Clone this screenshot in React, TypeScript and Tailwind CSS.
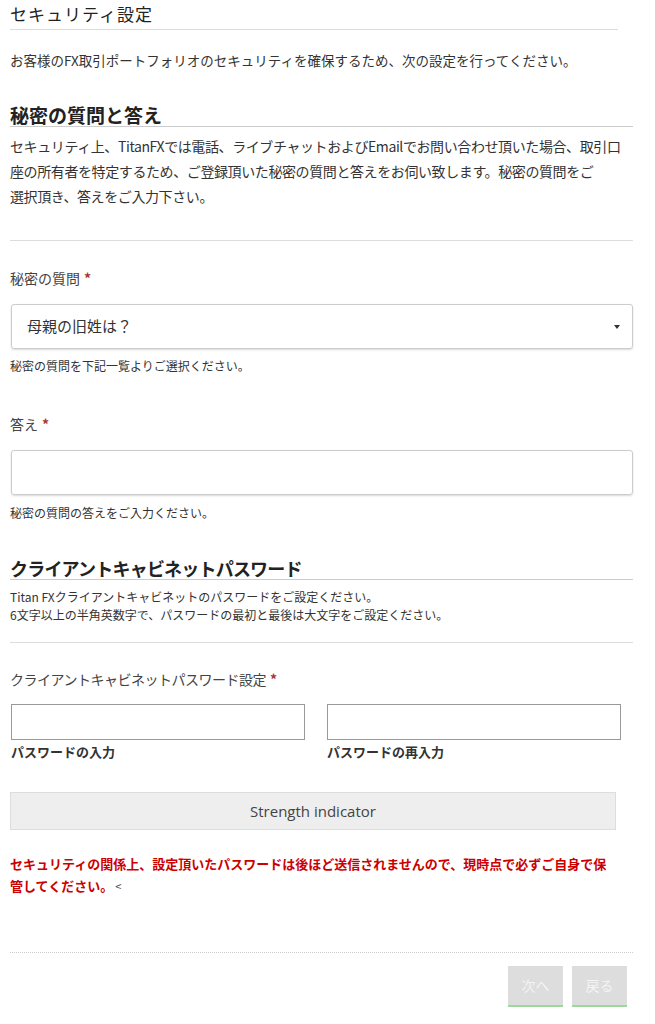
import React from "react";

const jp = { fontFamily: '"Noto Sans CJK JP", "Noto Sans", sans-serif' };

function Req() {
  return <span className="text-[#a33] ml-1 font-bold">*</span>;
}

export default function App() {
  return (
    <div className="w-[655px] min-h-[1024px] bg-white text-[#333]" style={jp}>
      <div className="pl-[10px] pr-[22px]">
        <div className="w-[608px] border-b border-[#ddd] pt-[2px] pb-[3px]">
          <h1 className="text-[17px] leading-[24px] text-[#222] tracking-[1px]">セキュリティ設定</h1>
        </div>
        <p className="mt-[20px] text-[13.5px] leading-[20px]">
          お客様のFX取引ポートフォリオのセキュリティを確保するため、次の設定を行ってください。
        </p>

        <div className="mt-[33px] border-b border-[#ccc]">
          <h2 className="text-[19px] leading-[23px] font-bold text-[#222]">秘密の質問と答え</h2>
        </div>
        <p className="mt-[7px] text-[14px] leading-[25px] tracking-[-0.4px]">
          セキュリティ上、TitanFXでは電話、ライブチャットおよびEmailでお問い合わせ頂いた場合、取引口
          <br />
          座の所有者を特定するため、ご登録頂いた秘密の質問と答えをお伺い致します。秘密の質問をご
          <br />
          選択頂き、答えをご入力下さい。
        </p>
        <div className="mt-[31px] border-t border-[#ddd]" />

        <label className="block mt-[26px] text-[14px] leading-[22px] text-[#444]">
          秘密の質問<Req />
        </label>
        <div className="mt-[15px] ml-[1px] h-[45px] border border-[#ccc] rounded-[3px] shadow-[0_1px_2px_rgba(0,0,0,0.15)] flex items-center justify-between pl-[15px] pr-[12px]">
          <span className="text-[15px] text-[#333]">母親の旧姓は？</span>
          <span className="w-0 h-0 border-l-[3.5px] border-r-[3.5px] border-t-[4px] border-l-transparent border-r-transparent border-t-[#333]" />
        </div>
        <p className="mt-[8px] text-[12px] leading-[18px]">秘密の質問を下記一覧よりご選択ください。</p>

        <label className="block mt-[38px] text-[14px] leading-[22px] text-[#444]">
          答え<Req />
        </label>
        <div className="mt-[15px] ml-[1px] h-[45px] border border-[#ccc] rounded-[3px] shadow-[0_1px_2px_rgba(0,0,0,0.15)]" />
        <p className="mt-[9px] text-[12px] leading-[18px]">秘密の質問の答えをご入力ください。</p>

        <div className="mt-[35px] border-b border-[#ccc]">
          <h2 className="text-[18px] leading-[22px] font-bold text-[#222] tracking-[-0.8px]">クライアントキャビネットパスワード</h2>
        </div>
        <p className="mt-[8px] text-[12px] leading-[18px]">
          Titan FXクライアントキャビネットのパスワードをご設定ください。
          <br />
          6文字以上の半角英数字で、パスワードの最初と最後は大文字をご設定ください。
        </p>
        <div className="mt-[18px] border-t border-[#ddd]" />

        <label className="block mt-[25px] text-[14px] leading-[22px] text-[#444] tracking-[-0.5px]">
          クライアントキャビネットパスワード設定<Req />
        </label>
        <div className="mt-[14px] flex gap-[22px] ml-[1px]">
          <div className="w-[294px]">
            <div className="h-[36px] border border-[#999]" />
            <div className="mt-[2px] text-[13px] leading-[20px] font-bold text-[#333]">パスワードの入力</div>
          </div>
          <div className="w-[294px]">
            <div className="h-[36px] border border-[#999]" />
            <div className="mt-[2px] text-[13px] leading-[20px] font-bold text-[#333]">パスワードの再入力</div>
          </div>
        </div>

        <div
          className="mt-[30px] w-[606px] h-[38px] bg-[#eee] border border-[#ddd] flex items-center justify-center text-[15px] text-[#444]"
          style={{ fontFamily: '"Open Sans", sans-serif' }}
        >
          Strength indicator
        </div>

        <p className="mt-[23px] text-[13px] leading-[22px] font-bold text-[#c00]">
          セキュリティの関係上、設定頂いたパスワードは後ほど送信されませんので、現時点で必ずご自身で保
          <br />
          管してください。
          <span className="text-[#444] font-normal text-[11px] ml-[2px]">&lt;</span>
        </p>

        <div className="mt-[55px] border-t border-dotted border-[#ccc]" />
        <div className="mt-[13px] flex justify-end gap-[9px] pr-[6px]">
          <button className="w-[55px] h-[41px] bg-[#ddd] border-b-2 border-[#9ad99a] text-[14px] text-[#f4f4f4]">次へ</button>
          <button className="w-[55px] h-[41px] bg-[#ddd] border-b-2 border-[#9ad99a] text-[14px] text-[#f4f4f4]">戻る</button>
        </div>
      </div>
    </div>
  );
}
